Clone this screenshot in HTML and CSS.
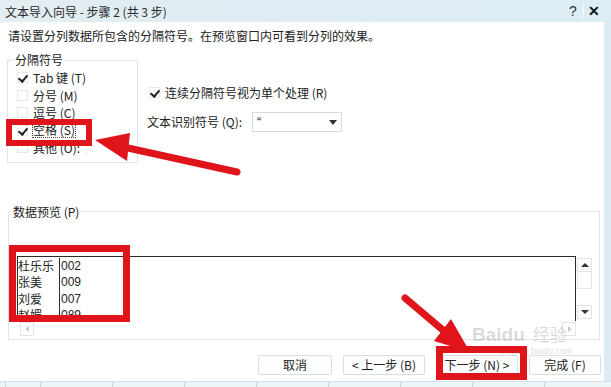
FILE: index.html
```html
<!DOCTYPE html>
<html lang="zh-CN">
<head>
    <meta charset="UTF-8">
    <title>文本导入向导 - 步骤 2</title>
    <link rel="stylesheet" href="styles.css">
</head>
<body>
    <div class="titlebar">
        <span class="title">文本导入向导 - 步骤 2 (共 3 步)</span>
        <span class="ctrl">?</span>
        <span class="ctrl close">✕</span>
    </div>

    <div class="main">
        <div class="dialog">
            <p class="intro">请设置分列数据所包含的分隔符号。在预览窗口内可看到分列的效果。</p>

            <div class="options">
                <fieldset class="group delims">
                    <legend>分隔符号</legend>
                    <label class="check"><span class="box on"></span>Tab 键 (T)</label>
                    <label class="check"><span class="box"></span>分号 (M)</label>
                    <label class="check"><span class="box"></span>逗号 (C)</label>
                    <label class="check"><span class="box on"></span><span class="focus">空格 (S)</span></label>
                    <label class="check"><span class="box"></span>其他 (O):<span class="other-input"></span></label>
                </fieldset>

                <div class="side">
                    <label class="check"><span class="box on"></span>连续分隔符号视为单个处理 (R)</label>
                    <div class="qualifier">
                        <span class="q-label">文本识别符号 (Q):</span>
                        <div class="select"><span class="sel-val">“</span><span class="drop"></span></div>
                    </div>
                </div>
            </div>

            <fieldset class="group preview">
                <legend>数据预览 (P)</legend>
                <div class="grid-row">
                    <div class="table">
                        <div class="col names">
                            <div>杜乐乐</div>
                            <div>张美</div>
                            <div>刘爱</div>
                            <div>赵媚</div>
                        </div>
                        <div class="col nums">
                            <div>002</div>
                            <div>009</div>
                            <div>007</div>
                            <div>089</div>
                        </div>
                    </div>
                    <div class="vscroll">
                        <span class="sbtn up"></span>
                        <span class="thumb"></span>
                        <span class="sbtn down"></span>
                    </div>
                </div>
                <div class="hscroll">
                    <span class="sbtn left"></span>
                    <span class="sbtn right"></span>
                </div>
            </fieldset>

            <div class="buttons">
                <button class="btn w74">取消</button>
                <button class="btn w82">&lt; 上一步 (B)</button>
                <button class="btn w82">下一步 (N) &gt;</button>
                <button class="btn w72">完成 (F)</button>
            </div>
        </div>
        <div class="edge"></div>
    </div>

    <div class="sheet-strip"></div>

    <!-- annotations drawn over the dialog -->
    <div class="watermark">
        <span class="wm-big">Baidu</span><span class="wm-cn">经验</span>
        <span class="wm-url">jingyan.baidu.com</span>
    </div>
    <svg class="marks" width="611" height="387" viewBox="0 0 611 387">
        <g fill="none" stroke="#e0141b">
            <rect x="9" y="122" width="80" height="21" stroke-width="6"/>
            <rect x="12.5" y="248.5" width="114" height="70" stroke-width="7"/>
            <rect x="439.5" y="349.5" width="84" height="27" stroke-width="7"/>
            <line x1="237" y1="172" x2="128" y2="148" stroke-width="7" stroke-linecap="round"/>
            <line x1="405" y1="298" x2="444" y2="331" stroke-width="7" stroke-linecap="round"/>
        </g>
        <g fill="#e0141b">
            <polygon points="95,140 130,133 127,161"/>
            <polygon points="470,352 451,319 434,341"/>
        </g>
    </svg>
</body>
</html>
```

FILE: styles.css
```css
* {
    box-sizing: border-box;
}
body {
    margin: 0;
    width: 611px;
    height: 387px;
    overflow: hidden;
    position: relative;
    background: #fff;
    color: #222;
    font-family: "Noto Sans CJK SC", "Liberation Sans", sans-serif;
    font-size: 12px;
}
.titlebar {
    height: 22px;
    display: flex;
    align-items: center;
    padding: 0 8px 0 5px;
    background: linear-gradient(to right, #e3edf2, #dcedf6);
}
.title {
    flex: 1;
    color: #2a2a2a;
}
.ctrl {
    width: 20px;
    text-align: center;
    font-size: 14px;
    font-family: "Liberation Sans", sans-serif;
    color: #333;
}
.close {
    font-weight: bold;
    color: #111;
    border-left: 1px solid #f4f9fb;
}
.main {
    display: flex;
    height: 359px;
}
.dialog {
    width: 604px;
    padding: 0 3px 0 7px;
    display: flex;
    flex-direction: column;
}
.edge {
    width: 7px;
    background: #dcebf3;
}
.intro {
    margin: 6px 0 0 1px;
    line-height: 16px;
}

/* group boxes */
.group {
    margin: 0;
    border: 1px solid #dfe6ea;
    min-width: 0;
}
.group legend {
    line-height: 16px;
    padding: 0 2px;
}
.options {
    display: flex;
    margin-top: 8px;
}
.delims {
    width: 131px;
    padding: 1px 0 5px 9px;
}
.delims legend {
    margin-left: -4px;
}
.check {
    display: flex;
    align-items: center;
    height: 17.5px;
    white-space: nowrap;
}
.box {
    width: 11px;
    height: 11px;
    margin-right: 5px;
    border: 1px solid #e3e8eb;
    background: #fff;
    position: relative;
    flex: none;
}
.box.on::after {
    content: "";
    position: absolute;
    left: 2px;
    top: 0px;
    width: 4px;
    height: 7px;
    border: solid #222;
    border-width: 0 2px 2px 0;
    transform: rotate(40deg);
}
.focus {
    outline: 1px dotted #444;
    outline-offset: 0;
    line-height: 14px;
}
.other-input {
    width: 40px;
    height: 17px;
    margin-left: 6px;
    border-left: 1px solid #e6ebee;
}
.side {
    padding: 32px 0 0 2px;
    margin-left: 9px;
}
.qualifier {
    display: flex;
    align-items: center;
    margin: 10px 0 0 -2px;
}
.q-label {
    width: 105px;
}
.select {
    width: 90px;
    height: 20px;
    border: 1px solid #d3dde3;
    padding-left: 4px;
    line-height: 18px;
    display: flex;
    justify-content: space-between;
}
.sel-val {
    font-family: "Liberation Sans", sans-serif;
}
.drop {
    width: 0;
    height: 0;
    margin: 7px 4px 0 0;
    border-left: 4px solid transparent;
    border-right: 4px solid transparent;
    border-top: 5px solid #333;
}

/* data preview */
.preview {
    width: 592px;
    margin: 41px 0 0 1px;
    padding: 36px 7px 3px 8px;
}
.preview legend {
    margin-left: -6px;
}
.grid-row {
    display: flex;
    height: 65px;
}
.table {
    width: 559px;
    border: 1px solid #2b2b2b;
    border-bottom: none;
    display: flex;
    overflow: hidden;
    padding-top: 1px;
}
.col div {
    line-height: 16.5px;
    white-space: nowrap;
}
.names {
    width: 42px;
    border-right: 1px solid #2b2b2b;
}
.nums {
    padding-left: 1px;
    font-family: "Liberation Sans", sans-serif;
}
.vscroll {
    width: 15px;
    margin-left: 1px;
    padding: 2px 0;
    display: flex;
    flex-direction: column;
}
.sbtn {
    display: block;
    width: 15px;
    height: 14px;
    border: 1px solid #dfe5e9;
    background: #fff;
    position: relative;
}
.sbtn::after {
    content: "";
    position: absolute;
    left: 3px;
    top: 4px;
    border-left: 4px solid transparent;
    border-right: 4px solid transparent;
}
.up::after {
    border-bottom: 4px solid #333;
}
.down {
    margin-top: auto;
}
.down::after {
    border-top: 4px solid #333;
}
.thumb {
    display: block;
    height: 17px;
    border: 1px solid #e2e8eb;
    border-top: none;
}
.hscroll {
    width: 559px;
    height: 14px;
    margin-top: 1px;
    display: flex;
    justify-content: space-between;
    padding-left: 3px;
}
.hscroll .sbtn {
    width: 14px;
    height: 14px;
}
.left::after {
    left: 4px;
    top: 3px;
    border: 3px solid transparent;
    border-right: 4px solid #ccc;
    border-left: none;
}
.right::after {
    left: 5px;
    top: 3px;
    border: 3px solid transparent;
    border-left: 4px solid #ccc;
    border-right: none;
}

/* buttons */
.buttons {
    display: flex;
    justify-content: flex-end;
    margin-top: 15px;
}
.btn {
    height: 20px;
    margin-left: 11px;
    border: 1px solid #d9dfe3;
    border-radius: 2px;
    background: #fcfdfd;
    font-family: inherit;
    font-size: 12px;
    color: #222;
    padding: 0;
}
.w74 { width: 74px; }
.w82 { width: 82px; }
.w72 { width: 72px; }

.sheet-strip {
    height: 6px;
    border-top: 1px solid #cfe0e8;
    background: repeating-linear-gradient(to right, #c8d8e0 0 1px, #eef5f8 1px 72px);
    background-position: 40px 0;
}

/* overlays */
.marks {
    position: absolute;
    left: 0;
    top: 0;
    pointer-events: none;
}
.watermark {
    position: absolute;
    left: 472px;
    top: 324px;
    width: 110px;
    line-height: 20px;
    color: rgba(150, 150, 150, 0.35);
    pointer-events: none;
}
.wm-big {
    font-family: "Liberation Sans", sans-serif;
    font-weight: bold;
    font-size: 19px;
}
.wm-cn {
    font-size: 17px;
    margin-left: 8px;
}
.wm-url {
    display: block;
    margin: 0 0 0 28px;
    line-height: 10px;
    font-size: 9px;
    font-family: "Liberation Sans", sans-serif;
}
```
